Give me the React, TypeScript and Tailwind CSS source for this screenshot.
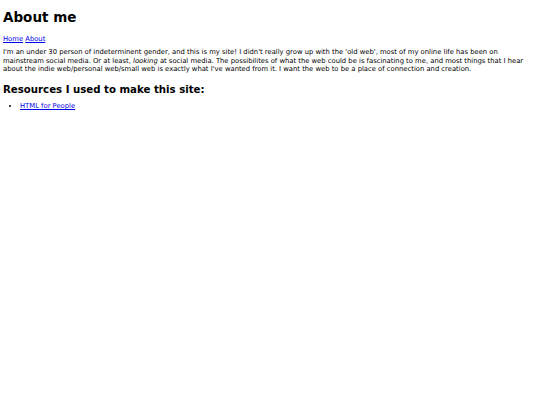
export default function App() {
  return (
    <div className="min-h-[405px] bg-white px-[3px] pt-[9px] text-black" style={{ fontFamily: '"DejaVu Sans", Verdana, sans-serif' }}>
      <h1 className="m-0 text-[13.5px] font-bold leading-[16px]">About me</h1>
      <nav className="mt-[9.5px] text-[6.8px] leading-[9px]">
        <a href="#" className="text-[#0000ee] underline">Home</a>{" "}
        <a href="#" className="text-[#0000ee] underline">About</a>
      </nav>
      <p className="mt-[4.5px] text-[6.8px] leading-[8.5px]">
        I'm an under 30 person of indeterminent gender, and this is my site! I didn't really grow up with the 'old web', most of my online life has been on mainstream social media. Or at least, <em>looking</em> at social media. The possibilites of what the web could be is fascinating to me, and most things that I hear about the indie web/personal web/small web is exactly what I've wanted from it. I want the web to be a place of connection and creation.
      </p>
      <h2 className="mt-[10px] text-[10.2px] font-bold leading-[12px]">Resources I used to make this site:</h2>
      <ul className="mt-[6.5px] list-disc pl-[17px] text-[6.8px] leading-[9px]">
        <li><a href="#" className="text-[#0000ee] underline">HTML for People</a></li>
      </ul>
    </div>
  );
}
